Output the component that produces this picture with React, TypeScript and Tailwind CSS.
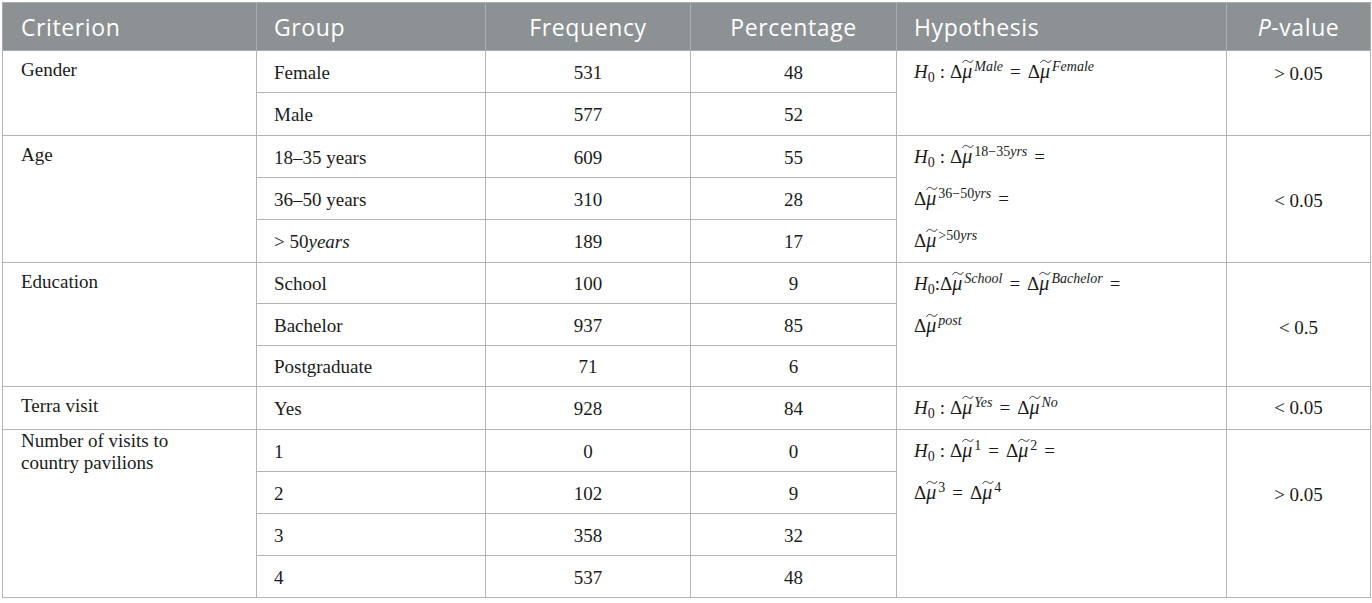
import type { ReactNode } from "react";

// Δμ̃ with a wide tilde drawn above μ
function DMu({ sup }: { sup: ReactNode }) {
  return (
    <span className="whitespace-nowrap">
      Δ
      <span className="relative inline-block italic leading-none text-[20px]">
        μ
        <svg className="absolute left-[0px] top-[-2px]" width="12" height="5" viewBox="0 0 12 5">
          <path d="M0.6 3.8C2 1 3.9 0.8 5.9 2.3S9.7 4 11.2 1" fill="none" stroke="currentColor" strokeWidth="0.9" />
        </svg>
      </span>
      <sup className="text-[14px] ml-[2px]">{sup}</sup>
    </span>
  );
}

function Eq() {
  return <span className="inline-block mx-[7px]">=</span>;
}

function H0({ tight = false }: { tight?: boolean }) {
  return (
    <span>
      <i>H</i>
      <sub className="text-[14px]">0</sub>
      {tight ? ":" : <span className="mx-[5px]">:</span>}
    </span>
  );
}

const crit = "align-top pl-[18px] pt-[7px] leading-[23px] border border-[#b4b4b4]";
const grp = "align-middle pl-[17px] pt-[3px] border border-[#b4b4b4]";
const num = "align-middle text-center pt-[3px] border border-[#b4b4b4]";
const hyp = "align-top pl-[17px] leading-[42px] border border-[#b4b4b4]";
const pv = "align-top text-center leading-[42px] border border-[#b4b4b4]";
const th = "align-middle font-normal pt-[1px] border border-[#a9adb0]";

export default function App() {
  return (
    <div className="min-h-screen bg-white pl-[2px] pt-[2px]">
      <table className="table-fixed border-collapse w-[1368px] border border-[#b4b4b4] text-[19px] text-[#1b1b1b] font-['Liberation_Serif',serif]">
        <colgroup>
          <col className="w-[254px]" />
          <col className="w-[229px]" />
          <col className="w-[205px]" />
          <col className="w-[206px]" />
          <col className="w-[330px]" />
          <col className="w-[144px]" />
        </colgroup>
        <thead>
          <tr className="h-[48px] bg-[#8c9194] text-white text-[23px] tracking-[0.6px] font-['Open_Sans',sans-serif]">
            <th className={`${th} text-left pl-[18px]`}>Criterion</th>
            <th className={`${th} text-left pl-[17px]`}>Group</th>
            <th className={`${th} text-center`}>Frequency</th>
            <th className={`${th} text-center`}>Percentage</th>
            <th className={`${th} text-left pl-[17px]`}>Hypothesis</th>
            <th className={`${th} text-center`}>
              <i>P</i>-value
            </th>
          </tr>
        </thead>
        <tbody>
          {/* Gender */}
          <tr className="h-[42px]">
            <td rowSpan={2} className={crit}>Gender</td>
            <td className={grp}>Female</td>
            <td className={num}>531</td>
            <td className={num}>48</td>
            <td rowSpan={2} className={hyp}>
              <H0 />
              <DMu sup={<i>Male</i>} />
              <Eq />
              <DMu sup={<i>Female</i>} />
            </td>
            <td rowSpan={2} className={`${pv} pt-[2px]`}>&gt; 0.05</td>
          </tr>
          <tr className="h-[43px]">
            <td className={grp}>Male</td>
            <td className={num}>577</td>
            <td className={num}>52</td>
          </tr>

          {/* Age */}
          <tr className="h-[42px]">
            <td rowSpan={3} className={crit}>Age</td>
            <td className={grp}>18–35 years</td>
            <td className={num}>609</td>
            <td className={num}>55</td>
            <td rowSpan={3} className={hyp}>
              <H0 />
              <DMu sup={<>18−35<i>yrs</i></>} />
              <Eq />
              <br />
              <DMu sup={<>36−50<i>yrs</i></>} />
              <Eq />
              <br />
              <DMu sup={<>&gt;50<i>yrs</i></>} />
            </td>
            <td rowSpan={3} className={`${pv} pt-[44px]`}>&lt; 0.05</td>
          </tr>
          <tr className="h-[42px]">
            <td className={grp}>36–50 years</td>
            <td className={num}>310</td>
            <td className={num}>28</td>
          </tr>
          <tr className="h-[43px]">
            <td className={grp}>
              &gt; 50<i>years</i>
            </td>
            <td className={num}>189</td>
            <td className={num}>17</td>
          </tr>

          {/* Education */}
          <tr className="h-[41px]">
            <td rowSpan={3} className={crit}>Education</td>
            <td className={grp}>School</td>
            <td className={num}>100</td>
            <td className={num}>9</td>
            <td rowSpan={3} className={hyp}>
              <H0 tight />
              <DMu sup={<i>School</i>} />
              <Eq />
              <DMu sup={<i>Bachelor</i>} />
              <Eq />
              <br />
              <DMu sup={<i>post</i>} />
            </td>
            <td rowSpan={3} className={`${pv} pt-[44px]`}>&lt; 0.5</td>
          </tr>
          <tr className="h-[42px]">
            <td className={grp}>Bachelor</td>
            <td className={num}>937</td>
            <td className={num}>85</td>
          </tr>
          <tr className="h-[41px]">
            <td className={grp}>Postgraduate</td>
            <td className={num}>71</td>
            <td className={num}>6</td>
          </tr>

          {/* Terra visit */}
          <tr className="h-[43px]">
            <td className={crit}>Terra visit</td>
            <td className={grp}>Yes</td>
            <td className={num}>928</td>
            <td className={num}>84</td>
            <td className={hyp}>
              <H0 />
              <DMu sup={<i>Yes</i>} />
              <Eq />
              <DMu sup={<i>No</i>} />
            </td>
            <td className={pv}>&lt; 0.05</td>
          </tr>

          {/* Visits to country pavilions */}
          <tr className="h-[42px]">
            <td rowSpan={4} className="align-top pl-[18px] pt-0 leading-[22px] border border-[#b4b4b4]">
              Number of visits to
              <br />
              country pavilions
            </td>
            <td className={grp}>1</td>
            <td className={num}>0</td>
            <td className={num}>0</td>
            <td rowSpan={4} className={hyp}>
              <H0 />
              <DMu sup="1" />
              <Eq />
              <DMu sup="2" />
              <Eq />
              <br />
              <DMu sup="3" />
              <Eq />
              <DMu sup="4" />
            </td>
            <td rowSpan={4} className={`${pv} pt-[44px]`}>&gt; 0.05</td>
          </tr>
          <tr className="h-[42px]">
            <td className={grp}>2</td>
            <td className={num}>102</td>
            <td className={num}>9</td>
          </tr>
          <tr className="h-[42px]">
            <td className={grp}>3</td>
            <td className={num}>358</td>
            <td className={num}>32</td>
          </tr>
          <tr className="h-[42px]">
            <td className={grp}>4</td>
            <td className={num}>537</td>
            <td className={num}>48</td>
          </tr>
        </tbody>
      </table>
    </div>
  );
}
